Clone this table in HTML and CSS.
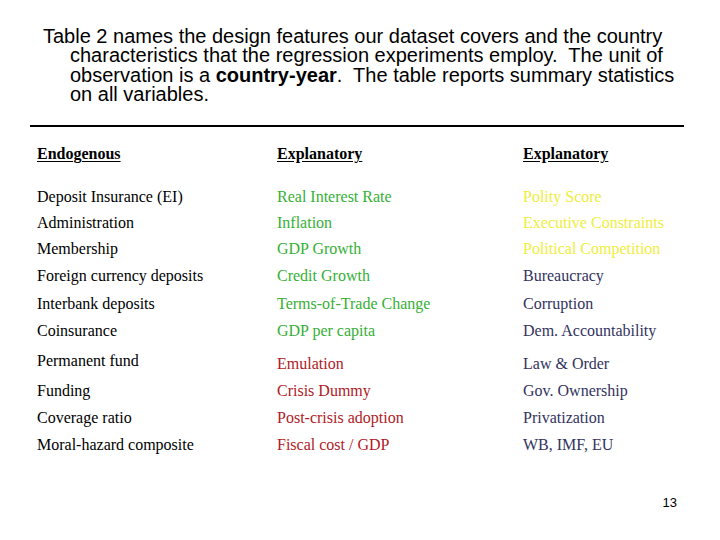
FILE: index.html
```html
<!DOCTYPE html>
<html>
<head>
<meta charset="utf-8">
<link rel="stylesheet" href="styles.css">
</head>
<body>
<div class="slide">
  <p class="intro">Table 2 names the design features our dataset covers and the country<br>characteristics that the regression experiments employ.&nbsp; The unit of<br>observation is a <b>country-year</b>.&nbsp; The table reports summary statistics<br>on all variables.</p>
  <div class="rule"></div>
  <div class="table">
    <div class="row head"><span>Endogenous</span><span>Explanatory</span><span>Explanatory</span></div>
    <div class="row first"><span>Deposit Insurance (EI)</span><span class="g">Real Interest Rate</span><span class="y">Polity Score</span></div>
    <div class="row"><span>Administration</span><span class="g">Inflation</span><span class="y">Executive Constraints</span></div>
    <div class="row"><span>Membership</span><span class="g">GDP Growth</span><span class="y">Political Competition</span></div>
    <div class="row gap1"><span>Foreign currency deposits</span><span class="g">Credit Growth</span><span class="n">Bureaucracy</span></div>
    <div class="row gap2"><span>Interbank deposits</span><span class="g">Terms-of-Trade Change</span><span class="n">Corruption</span></div>
    <div class="row gap1"><span>Coinsurance</span><span class="g">GDP per capita</span><span class="n">Dem. Accountability</span></div>
    <div class="row gap4"><span>Permanent fund</span><span class="r drop">Emulation</span><span class="n drop">Law &amp; Order</span></div>
    <div class="row gap1"><span>Funding</span><span class="r">Crisis Dummy</span><span class="n">Gov. Ownership</span></div>
    <div class="row gap1"><span>Coverage ratio</span><span class="r">Post-crisis adoption</span><span class="n">Privatization</span></div>
    <div class="row gap1"><span>Moral-hazard composite</span><span class="r">Fiscal cost / GDP</span><span class="n">WB, IMF, EU</span></div>
  </div>
  <div class="pagenum">13</div>
</div>
</body>
</html>
```

FILE: styles.css
```css
html, body {
  margin: 0;
  padding: 0;
  background: #ffffff;
}
.slide {
  width: 720px;
  height: 540px;
  overflow: hidden;
  display: flex;
  flex-direction: column;
}
.intro {
  margin: 26.6px 0 0 0;
  padding-left: 70px;
  text-indent: -27px;
  font-family: "Liberation Sans", Arial, sans-serif;
  font-size: 20px;
  line-height: 19.5px;
  color: #000;
  white-space: nowrap;
}
.rule {
  margin: 20.2px 36px 0 30px;
  height: 2px;
  background: #000;
}
.table {
  margin-top: 17.6px;
  padding-left: 37px;
  font-family: "Liberation Serif", "Times New Roman", serif;
  font-size: 16px;
  color: #000;
}
.row {
  display: grid;
  grid-template-columns: 240px 246px 1fr;
  align-items: start;
  line-height: 26px;
  white-space: nowrap;
}
.row.head {
  font-weight: bold;
  line-height: 20px;
}
.row.head span {
  text-decoration: underline;
  text-underline-offset: 2px;
}
.row.first { margin-top: 20px; }
.row.gap1 { margin-top: 1px; }
.row.gap2 { margin-top: 2px; }
.row.gap4 { margin-top: 4px; }
.drop { padding-top: 3px; }
.g { color: #35b035; }
.y { color: #eeee3c; }
.r { color: #b01a26; }
.n { color: #33335e; }
.pagenum {
  margin-top: 37px;
  padding-right: 43px;
  text-align: right;
  font-family: "Liberation Sans", Arial, sans-serif;
  font-size: 13px;
  line-height: 15px;
  color: #000;
}
```
